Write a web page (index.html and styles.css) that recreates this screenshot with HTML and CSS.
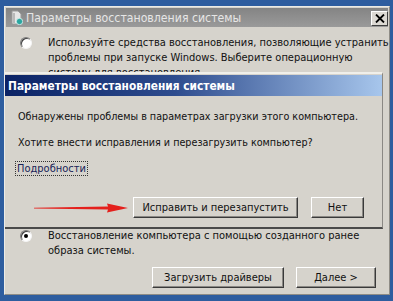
FILE: index.html
```html
<!DOCTYPE html>
<html lang="ru">
<head>
<meta charset="utf-8">
<title>Параметры восстановления системы</title>
<link rel="stylesheet" href="styles.css">
</head>
<body>
<div class="desktop">
  <div class="window">
    <div class="titlebar">
      <svg class="app-icon" width="13" height="15" viewBox="0 0 13 15">
        <path d="M2 1h6l3 3v10H2z" fill="#e6e6e6" stroke="#9a9a9a" stroke-width="1"/>
        <rect x="3" y="3" width="2" height="10" fill="#b8b8b8"/>
        <circle cx="9.5" cy="11.5" r="3.2" fill="#2aa6a0" stroke="#e8f4f4" stroke-width="0.8"/>
      </svg>
      <span class="title-text">Параметры восстановления системы</span>
      <span class="close-btn">
        <svg width="10" height="9" viewBox="0 0 10 9"><path d="M1 0.5l8 8M9 0.5l-8 8" stroke="#000" stroke-width="1.8"/></svg>
      </span>
    </div>

    <div class="option option-top">
      <span class="radio"></span>
      <p class="option-text">Используйте средства восстановления, позволяющие устранить<br>проблемы при запуске Windows. Выберите операционную<br>систему для восстановления.</p>
    </div>

    <div class="option option-bottom">
      <span class="radio checked"></span>
      <p class="option-text">Восстановление компьютера с помощью созданного ранее<br>образа системы.</p>
    </div>

    <div class="footer">
      <span class="btn btn-drivers">Загрузить драйверы</span>
      <span class="btn btn-next">Далее &gt;</span>
    </div>

    <div class="dialog">
      <div class="dialog-title">Параметры восстановления системы</div>
      <div class="dialog-body">
        <p class="msg">Обнаружены проблемы в параметрах загрузки этого компьютера.</p>
        <p class="msg msg-q">Хотите внести исправления и перезагрузить компьютер?</p>
        <span class="details">Подробности</span>
        <div class="dialog-buttons">
          <span class="btn btn-fix">Исправить и перезапустить</span>
          <span class="btn btn-no">Нет</span>
        </div>
      </div>
    </div>

    <svg class="arrow" width="96" height="14" viewBox="0 0 96 14">
      <path d="M0 6.8 L74 5.6 L73 2.5 L94 7 L73 11.5 L74 8.6 L0 7.6 Z" fill="#e4201c"/>
    </svg>
  </div>
</div>
</body>
</html>
```
FILE: styles.css
```css
* { box-sizing: border-box; }
html, body {
  margin: 0;
  padding: 0;
}
body {
  width: 393px;
  height: 301px;
  overflow: hidden;
  background: #2e5d9f;
  font-family: "DejaVu Sans Condensed", "DejaVu Sans", sans-serif;
  font-size: 11px;
  color: #111;
}
.desktop {
  height: 301px;
  padding: 6px 3px 6px 4px;
  display: flex;
}
.window {
  position: relative;
  flex: 1;
  display: flex;
  flex-direction: column;
  background: #d6d3cc;
  border: 1px solid #ecebe6;
  border-right-color: #8e8c86;
  border-bottom-color: #8e8c86;
}
.titlebar {
  margin: 1px 1px 0;
  height: 19px;
  display: flex;
  align-items: center;
  padding-left: 4px;
  background: linear-gradient(#848484, #9a9a9a);
  color: #e6e6e6;
  font-size: 12.2px;
}
.app-icon { flex: none; margin-right: 3px; }
.title-text { flex: 1; white-space: nowrap; }
.close-btn {
  flex: none;
  width: 17px;
  height: 15px;
  margin-top: 2px;
  display: flex;
  align-items: center;
  justify-content: center;
  background: #dcd9d3;
  border: 1px solid;
  border-color: #ffffff #404040 #404040 #ffffff;
}
.option {
  display: flex;
  align-items: flex-start;
  padding-left: 15px;
}
.option-top { padding-top: 8px; }
.option-bottom { margin-top: 148px; }
.option-text {
  margin: 0 0 0 16px;
  line-height: 15px;
  white-space: nowrap;
}
.radio {
  flex: none;
  width: 12px;
  height: 12px;
  margin-top: 2px;
  border-radius: 50%;
  background: #fff;
  border: 1px solid;
  border-color: #7c7c7c #f4f4f4 #f4f4f4 #7c7c7c;
  box-shadow: inset 1px 1px 0 #404040;
  display: flex;
  align-items: center;
  justify-content: center;
}
.radio.checked::after {
  content: "";
  width: 4px;
  height: 4px;
  border-radius: 50%;
  background: #000;
}
.footer {
  display: flex;
  justify-content: flex-end;
  gap: 12px;
  padding: 9px 13px 0 0;
}
.btn {
  display: flex;
  align-items: center;
  justify-content: center;
  height: 21px;
  background: #d6d3cc;
  border: 1px solid;
  border-color: #ffffff #3a3a3a #3a3a3a #ffffff;
  box-shadow: inset -1px -1px 0 #8a8884;
  font-size: 11px;
  color: #111;
}
.btn-drivers { width: 132px; }
.btn-next { width: 80px; }

.dialog {
  position: absolute;
  left: 0;
  top: 65px;
  width: 378px;
  height: 157px;
  background: #d6d3cc;
  border-top: 2px solid #f0efea;
  border-right: 1px solid #8a8884;
  border-bottom: 2px solid #4a4a4a;
  display: flex;
  flex-direction: column;
}
.dialog-title {
  height: 21px;
  margin-top: 1px;
  padding-left: 3px;
  display: flex;
  align-items: center;
  background: linear-gradient(90deg, #0b2365 0%, #2e4c8e 45%, #a7c6ec 100%);
  color: #fff;
  font-weight: bold;
  font-size: 11.8px;
}
.dialog-body {
  flex: 1;
  padding: 13px 0 0 13px;
  display: flex;
  flex-direction: column;
  align-items: flex-start;
}
.msg { margin: 0; line-height: 15px; white-space: nowrap; font-size: 10.7px; }
.msg-q { margin-top: 11px; }
.details {
  margin-top: 12px;
  margin-left: -2px;
  padding: 0 1px;
  line-height: 13px;
  color: #1a2358;
  outline: 1px dotted #333;
}
.dialog-buttons {
  align-self: stretch;
  display: flex;
  justify-content: flex-end;
  gap: 13px;
  margin-top: 22px;
  padding-right: 18px;
}
.btn-fix { width: 165px; }
.btn-no { width: 53px; }
.arrow {
  position: absolute;
  left: 29px;
  top: 194px;
}
```
